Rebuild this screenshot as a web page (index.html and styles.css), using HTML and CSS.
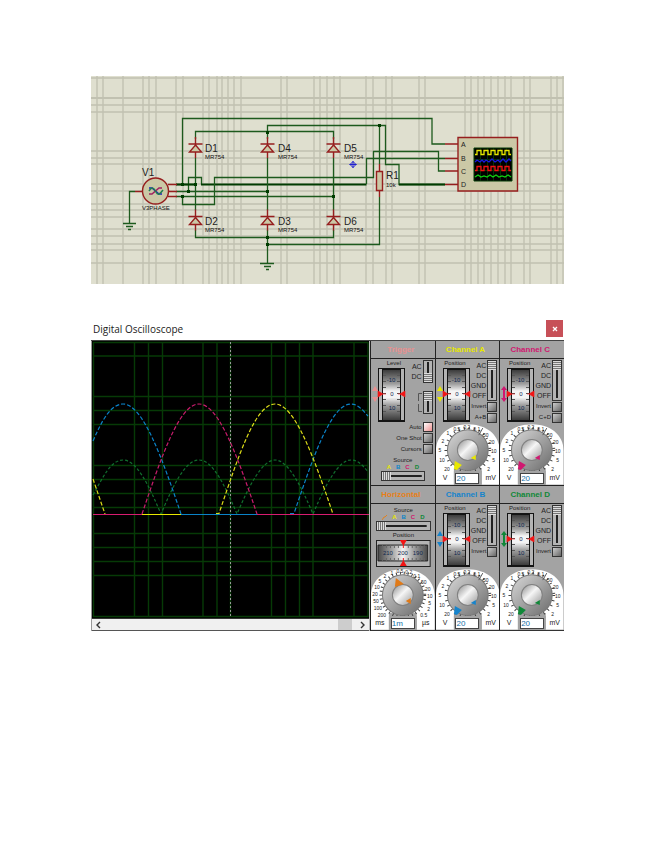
FILE: index.html
```html
<!DOCTYPE html>
<html lang="en">
<head>
<meta charset="utf-8">
<title>Three-phase rectifier</title>
<link rel="stylesheet" href="styles.css">
</head>
<body>
<svg class="defs" aria-hidden="true">
  <defs>
    <linearGradient id="drum" x1="0" y1="0" x2="0" y2="1">
      <stop offset="0" stop-color="#3c3c3c"/><stop offset=".28" stop-color="#a0a0a0"/><stop offset=".42" stop-color="#f4f4f4"/><stop offset=".55" stop-color="#f4f4f4"/><stop offset=".7" stop-color="#a0a0a0"/><stop offset="1" stop-color="#3c3c3c"/>
    </linearGradient>
    <linearGradient id="drum-h">
      <stop offset="0" stop-color="#4a4a4a"/><stop offset=".3" stop-color="#a8a8a8"/><stop offset=".5" stop-color="#f4f4f4"/><stop offset=".7" stop-color="#a8a8a8"/><stop offset="1" stop-color="#4a4a4a"/>
    </linearGradient>
    <linearGradient id="knob" x1="0" y1="0" x2="1" y2="1">
      <stop offset="0" stop-color="#d8d8d8"/><stop offset=".5" stop-color="#a2a2a2"/><stop offset="1" stop-color="#6c6c6c"/>
    </linearGradient>
    <linearGradient id="cap" x1="0" y1="0" x2="1" y2="1">
      <stop offset="0" stop-color="#8e8e8e"/><stop offset=".45" stop-color="#f6f6f6"/><stop offset="1" stop-color="#989898"/>
    </linearGradient>
    <symbol id="wheel" viewBox="0 0 34 54">
      <path d="M6 0h27v54H6z" fill="#141414"/>
      <path d="M7 1h3v51H7zM29 1h3v51h-3z" fill="#b4b4b4"/>
      <path d="M11 2h17v50H11z" fill="url(#drum)"/>
      <path d="M11 7.500h3m-3 6h3m-3 6h3m-3 6h3m-3 6h3m-3 6h3m-3 6h3M25 7.500h3m-3 6h3m-3 6h3m-3 6h3m-3 6h3m-3 6h3m-3 6h3" stroke="#555" stroke-width="1"/>
      <path d="M6 23l5 3-5 3zM33 23l-5 3 5 3zM11 26h3M26 26h3" fill="#f21414" stroke="#f21414" stroke-width=".6"/>
      <g class="drum-text"><text x="19" y="14">-10</text><text x="20" y="28">0</text><text x="20" y="42">10</text></g>
    </symbol>
    <symbol id="arrows" viewBox="0 0 34 54">
      <path d="M3 18l3 5H0zM3 34l3-5H0z" fill="currentColor"/>
    </symbol>
    <symbol id="arrows-joined" viewBox="0 0 34 54">
      <path d="M3 18l3 4H4v8h2l-3 4-3-4h2v-8H0z" fill="currentColor"/>
    </symbol>
    <symbol id="knob-body" viewBox="0 0 64 61">
      <circle cx="32" cy="26" r="21" fill="#777"/>
      <circle cx="32" cy="26" r="20" fill="url(#knob)"/>
      <circle cx="32" cy="26" r="11" fill="#808080"/>
      <circle cx="32" cy="26" r="10" fill="url(#cap)"/>
    </symbol>
    <symbol id="dial" viewBox="0 0 64 61">
      <path d="M0 61V27C0 10 14 0 32 0s32 10 32 27v34H46V44H18v17z" fill="#fff"/>
      <circle cx="32" cy="26" r="22" fill="none" stroke="#444" stroke-dasharray="1 4.200" stroke-width="3"/>
      <path d="M18 47h28v14H18z" fill="#a3a3a3"/>
      <use href="#knob-body" width="64" height="61"/>
      <g class="dial-text">
        <text x="11" y="47">20</text><text x="6" y="38">10</text><text x="4" y="28">5</text><text x="7" y="19">2</text><text x="12" y="11">1</text><text x="21" y="7">0.5</text><text x="31" y="5">0.2</text><text x="41" y="7">0.1</text><text x="50" y="13">50</text><text x="56" y="20">20</text><text x="58" y="29">10</text><text x="58" y="38">5</text><text x="53" y="47">2</text>
      </g>
      <path d="M43 11l4-7" stroke="#555"/>
      <g class="unit-text"><text x="9" y="56">V</text><text x="55" y="56">mV</text></g>
      <path d="M19 37l7 4-5 5-3-1zM35 34l5-3v5z" fill="currentColor"/>
    </symbol>
    <symbol id="diode" viewBox="-8 -8 16 24">
      <path d="M0-7V14" class="part"/><path d="M0 1l6 7H-6z" class="part body"/><path d="M-7 0H7" class="part"/>
    </symbol>
  </defs>
</svg>

<main class="page">
  <svg class="schematic" viewBox="91 76 473 208" role="img" aria-label="Rectifier schematic">
    <path class="sheet" d="M91 76h473v208H91z"/>
    <path class="grid" d="M97 76v208M103 76v208M123 76v208M143 76v208M149 76v208M156 76v208M176 76v208M183 76v208M203 76v208M209 76v208M217 76v208M222 76v208M228 76v208M234 76v208M241 76v208M281 76v208M287 76v208M314 76v208M320 76v208M327 76v208M334 76v208M340 76v208M366 76v208M373 76v208M386 76v208M392 76v208M419 76v208M425 76v208M465 76v208M471 76v208M478 76v208M484 76v208M491 76v208M498 76v208M505 76v208M511 76v208M524 76v208M530 76v208M551 76v208M557 76v208M563 76v208"/>
    <path class="grid" d="M91 78h473M91 105h473M91 112h473M91 151h473M91 158h473M91 164h473M91 184h473M91 191h473M91 204h473M91 210h473M91 217h473M91 229h473M91 236h473M91 244h473M91 250h473M91 263h473"/>
    <path class="grid heavy" d="M91 98h473"/>

    <path class="wire" d="M182.500 184V118.500H432V144h13M267.500 139V125.500H379.500h6V164.500H399V184.500h46M195.500 139V131.500H333.500V139"/>
    <path class="wire" d="M176 184.500h19.500M176 191.500h91.500M176 196.500h157.500M188.500 191V177.500H201.500V184.500"/>
    <path class="wire bold" d="M176 184.500h19M201 184.500H366.500M399 184.500h46"/>
    <path class="wire" d="M366.500 184V158.500H445M182.500 197V204.500H214.500V177.500H373.500V151.500H438.500V171H445"/>
    <path class="wire" d="M195.500 158v52M267.500 158v52M333.500 158v52M195.500 230v7.500h138V230M267.500 230v33M379.500 125v39M379.500 197v47.500H267.500M135 191.500h-5.500V223"/>
    <path class="ground" d="M260 263.500h14M264 266.500h7M266 269.500h3M123 223.500h13M126 226.500h7M128 229.500h3"/>
    <path class="node" d="M181 183h3v3h-3zM194 183h3v3h-3zM187 190h3v3h-3zM181 195h3v3h-3zM266 131h3v3h-3zM266 190h3v3h-3zM332 195h3v3h-3zM266 236h3v3h-3zM266 243h3v3h-3zM378 124h3v3h-3z"/>

    <use href="#diode" x="187.500" y="136" width="16" height="24"/>
    <use href="#diode" x="259.500" y="136" width="16" height="24"/>
    <use href="#diode" x="325.500" y="136" width="16" height="24"/>
    <use href="#diode" x="187.500" y="208.500" width="16" height="24"/>
    <use href="#diode" x="259.500" y="208.500" width="16" height="24"/>
    <use href="#diode" x="325.500" y="208.500" width="16" height="24"/>

    <path class="part" d="M135 191.500h8M168 184.500h9M168 191.500h9M168 196.500h9M379.500 164v33M445 144h13M445 158.500h13M445 171h13M445 184.500h13"/>
    <circle class="part body" cx="155.500" cy="191" r="13"/>
    <g class="phases"><path class="phase-a" d="M149 188h3l7 6h3"/><path class="phase-b" d="M149 194h3l7-6h3"/><path class="phase-c" d="M149 191c3-5 5-3 7 1s4 2 7-2"/></g>
    <path class="part body" d="M376.500 171.500h6v19h-6z"/>
    <path class="part body" d="M458 137.500h59.500v53.500H458z"/>
    <path d="M474 148h38v33h-38z"/>
    <path d="M474 148h38v33h-38z" fill="none" stroke="#073c07"/>
    <path d="M480.500 148v33M487.500 148v33M493.500 148v33M500.500 148v33M506.500 148v33M474 159.500h38M474 170.500h38" stroke="#063306"/>
    <g class="traces">
      <path class="yellow" d="M475 154.500h2v-4h4v4h3v-4h4v4h3v-4h4v4h3v-4h4v4h3v-4h4v4h2"/>
      <path class="blue" d="M475 162l2-2 3 2 2-2 2 2 2-2 3 2 3-3 3 3 3-2 2 2 3-3 3 3 3-3 2 2"/>
      <path class="red" d="M475 170.500h2v-4h4v4h3v-4h4v4h3v-4h4v4h3v-4h4v4h3v-4h4v4h2"/>
      <path class="green" d="M475 177l3-2 3 2 3-1 3 1 3-2 3 2 3-2 3 2 3-1 3 1 3-2 3 2"/>
    </g>
    <path d="M350 164.500l3-3 3 3-3 3zM349.500 164.500h7M353 161v7" fill="none" stroke="#2020d0"/>
    <g class="name">
      <text x="142" y="176">V1</text><text x="205" y="152">D1</text><text x="278" y="152">D4</text><text x="344" y="152">D5</text>
      <text x="205" y="225">D2</text><text x="278" y="225">D3</text><text x="344" y="225">D6</text><text x="386" y="179">R1</text>
    </g>
    <g class="value">
      <text x="142" y="210">V3PHASE</text><text x="205" y="159">MR754</text><text x="278" y="159">MR754</text><text x="344" y="159">MR754</text>
      <text x="205" y="232">MR754</text><text x="278" y="232">MR754</text><text x="344" y="232">MR754</text><text x="386" y="187">10k</text>
    </g>
    <g class="pin"><text x="461" y="147">A</text><text x="461" y="161">B</text><text x="461" y="174">C</text><text x="461" y="187">D</text></g>
  </svg>

  <section class="scope">
    <header class="titlebar">
      <h1>Digital Oscilloscope</h1>
      <button class="close" type="button" aria-label="Close"><svg viewBox="0 0 6 6" width="6" height="6"><path d="M1 1l4 4M5 1L1 5" stroke="#fff" stroke-width="1.300"/></svg></button>
    </header>
    <div class="instrument">
      <div class="display">
        <svg class="plot" viewBox="92 341 277 277" preserveAspectRatio="none" role="img" aria-label="Waveforms">
          <path d="M92 341h277v277H92z"/>
          <path class="graticule" d="M93.500 342v275M134.500 342v275M148.500 342v275M162.500 342v275M203 342v275M217 342v275M230.500 342v275M271.500 342v275M285.500 342v275M299.500 342v275M313 342v275M354 342v275M368 342v275M93 342.500h275M93 356h275M93 396.500h275M93 410.500h275M93 424.500h275M93 465.500h275M93 479.500h275M93 493.500h275M93 507.500h275M93 533.500h275M93 547.500h275M93 561.500h275M93 575.500h275M93 616.500h275"/>
          <path class="cursor" d="M230.500 342v275"/>
          <g class="wave-d"><path d="M93 495c10-18 18-35 30-35 14 0 26 26 38 54 12-28 24-54 38-54s26 26 38 54c12-28 25-54 38-54s26 26 38 54c12-28 25-54 38-54 6 0 11 4 17 12"/></g>
          <g class="wave-b"><path d="M93 441c9-21 18-37 30-37 20 0 39 54 58 110"/><path d="M290 513.500h4c19-56 37-109.500 57-109.500 6 0 11 5 17 12"/></g>
          <g class="wave-c"><path d="M142 514c19-56 37-110 57-110s39 54 58 110"/></g>
          <g class="wave-a"><path d="M93 479l12 35M216 513.500h3c19-56 36-109.500 56-109.500s39 54 58 110"/></g>
          <path class="base-c" d="M93 514.500h276"/><path class="base-a" d="M142 514.500h39"/><path class="base-b" d="M181 514.500h76"/>
        </svg>
        <div class="scrollbar">
          <button type="button" aria-label="Scroll left"><svg viewBox="0 0 6 8" width="6" height="8"><path d="M5 1L2 4l3 3"/></svg></button>
          <input type="range" aria-label="Scroll" min="0" max="100" value="98">
          <button type="button" aria-label="Scroll right"><svg viewBox="0 0 6 8" width="6" height="8"><path d="M1 1l3 3-3 3"/></svg></button>
        </div>
      </div>

      <div class="controls">
        <section class="panel trigger">
          <h2>Trigger</h2>
          <div class="trigger-body">
            <div class="knob-column"><span>Level</span><svg class="wheel" viewBox="0 0 34 54"><use href="#wheel"/><use href="#arrows"/></svg></div>
            <div class="trigger-side">
              <div class="switch"><label for="t-couple">AC<br>DC</label><input id="t-couple" class="vertical" type="range" min="0" max="1" value="1"></div>
              <div class="switch"><label for="t-edge"><svg width="6" height="22" viewBox="0 0 6 22" role="img" aria-label="Edge"><path d="M6 1.500H2.500V9M2.500 12v7.500H6" fill="none" stroke="#555"/></svg></label><input id="t-edge" class="vertical" type="range" min="0" max="1" value="0"></div>
            </div>
          </div>
          <div class="modes">
            <label for="auto">Auto</label><button id="auto" class="lit" type="button"></button>
            <label for="oneshot">One Shot</label><button id="oneshot" type="button"></button>
            <label for="cursors">Cursors</label><button id="cursors" type="button"></button>
          </div>
          <div class="source">
            <label for="t-source">Source</label>
            <div class="letters"><b class="a">A</b><b class="b">B</b><b class="c">C</b><b class="d">D</b></div>
            <input id="t-source" class="horizontal" type="range" min="0" max="3" value="0">
          </div>
        </section>

        <section class="panel channel-a">
          <h2>Channel A</h2>
          <div class="channel-body">
            <div class="knob-column"><span>Position</span><svg class="wheel" viewBox="0 0 34 54"><use href="#wheel"/><use href="#arrows"/></svg></div>
            <div class="channel-side">
              <div class="switch"><label for="a-couple">AC<br>DC<br>GND<br>OFF</label><input id="a-couple" class="vertical" type="range" min="0" max="3" value="0"></div>
              <div class="push"><label for="a-inv">Invert</label><button id="a-inv" type="button"></button></div>
              <div class="push"><label for="a-sum">A+B</label><button id="a-sum" type="button"></button></div>
            </div>
          </div>
          <div class="dial"><svg viewBox="0 0 64 61"><use href="#dial"/></svg><input type="text" aria-label="Channel A scale" value="20"></div>
        </section>

        <section class="panel channel-c">
          <h2>Channel C</h2>
          <div class="channel-body">
            <div class="knob-column"><span>Position</span><svg class="wheel" viewBox="0 0 34 54"><use href="#wheel"/><use href="#arrows-joined"/></svg></div>
            <div class="channel-side">
              <div class="switch"><label for="c-couple">AC<br>DC<br>GND<br>OFF</label><input id="c-couple" class="vertical" type="range" min="0" max="3" value="0"></div>
              <div class="push"><label for="c-inv">Invert</label><button id="c-inv" type="button"></button></div>
              <div class="push"><label for="c-sum">C+D</label><button id="c-sum" type="button"></button></div>
            </div>
          </div>
          <div class="dial"><svg viewBox="0 0 64 61"><use href="#dial"/></svg><input type="text" aria-label="Channel C scale" value="20"></div>
        </section>

        <section class="panel horizontal-panel">
          <h2>Horizontal</h2>
          <div class="timebase">
            <label for="h-source">Source</label>
            <div class="letters"><svg width="5" height="5" viewBox="0 0 5 5"><path d="M0 5l2-3h1l2-2" fill="none" stroke="#e08020"/></svg><b class="a">A</b><b class="b">B</b><b class="c">C</b><b class="d">D</b></div>
            <input id="h-source" class="horizontal" type="range" min="0" max="4" value="0">
            <span>Position</span>
            <svg class="drum" viewBox="0 0 55 27">
              <path d="M0 0h55v27H0z" fill="#222"/><path d="M1 1h53v25H1z" fill="#b4b4b4"/><path d="M2 5h50v16H2z" fill="url(#drum-h)" stroke="#222"/>
              <path d="M6.500 5v3m4-3v3m4-3v3m4-3v3m4-3v3m10-3v3m4-3v3m4-3v3m4-3v3m4-3v3M6.500 18v3m4-3v3m4-3v3m4-3v3m4-3v3m10-3v3m4-3v3m4-3v3m4-3v3m4-3v3" stroke="#666"/>
              <path d="M24 0h7l-3 5v3h-1V5zM24 26h7l-3-5v-3h-1v3z" fill="#f21414"/>
              <g class="drum-text"><text x="12" y="15">210</text><text x="27" y="15">200</text><text x="42" y="15">190</text></g>
            </svg>
          </div>
          <div class="dial">
            <svg viewBox="0 0 64 61">
              <path d="M0 61V27C0 10 14 0 32 0s32 10 32 27v34H46V44H18v17z" fill="#fff"/>
              <circle cx="32" cy="26" r="22" fill="none" stroke="#444" stroke-dasharray="1 3" stroke-width="3"/>
              <path d="M18 47h28v14H18z" fill="#a3a3a3"/>
              <use href="#knob-body"/>
              <g class="dial-text"><text x="11" y="48">200</text><text x="7" y="41">100</text><text x="5" y="34">50</text><text x="4" y="27">20</text><text x="6" y="20">10</text><text x="9" y="14">5</text><text x="14" y="9">2</text><text x="21" y="6">1</text><text x="29" y="4">0.5</text><text x="38" y="5">0.2</text><text x="46" y="9">0.1</text><text x="53" y="15">50</text><text x="57" y="22">20</text><text x="59" y="29">10</text><text x="59" y="36">5</text><text x="58" y="42">2</text><text x="53" y="48">0.5</text></g>
              <g class="unit-text"><text x="9" y="56">ms</text><text x="55" y="56">µs</text></g>
              <path d="M25 9l8 6-9 3zM35 32l5-3v6z" fill="#e07a18"/>
            </svg>
            <input type="text" aria-label="Timebase" value="1m">
          </div>
        </section>

        <section class="panel channel-b">
          <h2>Channel B</h2>
          <div class="channel-body">
            <div class="knob-column"><span>Position</span><svg class="wheel" viewBox="0 0 34 54"><use href="#wheel"/><use href="#arrows"/></svg></div>
            <div class="channel-side">
              <div class="switch"><label for="b-couple">AC<br>DC<br>GND<br>OFF</label><input id="b-couple" class="vertical" type="range" min="0" max="3" value="0"></div>
              <div class="push"><label for="b-inv">Invert</label><button id="b-inv" type="button"></button></div>
            </div>
          </div>
          <div class="dial"><svg viewBox="0 0 64 61"><use href="#dial"/></svg><input type="text" aria-label="Channel B scale" value="20"></div>
        </section>

        <section class="panel channel-d">
          <h2>Channel D</h2>
          <div class="channel-body">
            <div class="knob-column"><span>Position</span><svg class="wheel" viewBox="0 0 34 54"><use href="#wheel"/><use href="#arrows-joined"/></svg></div>
            <div class="channel-side">
              <div class="switch"><label for="d-couple">AC<br>DC<br>GND<br>OFF</label><input id="d-couple" class="vertical" type="range" min="0" max="3" value="0"></div>
              <div class="push"><label for="d-inv">Invert</label><button id="d-inv" type="button"></button></div>
            </div>
          </div>
          <div class="dial"><svg viewBox="0 0 64 61"><use href="#dial"/></svg><input type="text" aria-label="Channel D scale" value="20"></div>
        </section>
      </div>
    </div>
  </section>
</main>
</body>
</html>
```
FILE: styles.css
```css
* { box-sizing: border-box; }
body { margin: 0; background: #fff; font-family: "Liberation Sans", Arial, sans-serif; color: #222; }
svg { display: block; }
button { padding: 0; border: 0; border-radius: 0; }
input { margin: 0; padding: 0; border-radius: 0; }
.defs { position: absolute; width: 0; height: 0; }

.page { padding: 76px 91px; display: flex; flex-direction: column; gap: 35px; }

/* Schematic */
.schematic { width: 100%; height: auto; }
.sheet { fill: #dfdfcf; }
.grid { stroke: #c1c1b1; stroke-width: 1.4px; fill: none; }
.heavy { stroke-width: 2px; }
.wire, .ground { fill: none; stroke: #1d5a1d; stroke-width: 1.3px; }
.bold { stroke: #003c00; stroke-width: 2px; }
.node { fill: #003c00; }
.part { fill: none; stroke: #961e1e; stroke-width: 1.4px; }
.body { fill: #cbc8a6; }
.phases path { fill: none; stroke-width: 1.5px; }
.phase-a { stroke: #2020c0; }
.phase-b { stroke: #a02060; }
.phase-c { stroke: #208050; }
.traces path { fill: none; stroke-width: 1.3px; }
.yellow { stroke: #e8e800; }
.blue { stroke: #1818e0; }
.red { stroke: #f01010; }
.green { stroke: #10d010; }
.name { font-size: 10px; fill: #222; }
.value { font-size: 6px; fill: #111; }
.pin { font-size: 7px; fill: #222; }

/* Oscilloscope window */
.titlebar { display: flex; justify-content: space-between; align-items: center; height: 21px; padding: 0 1px 2px 2px; }
.titlebar h1 { margin: 0; font: 10px "Open Sans", sans-serif; color: #222; }
.close { width: 17px; height: 17px; background: #c75058; display: grid; place-items: center; }
.instrument { display: grid; grid-template-columns: 1fr 194px; border-top: 1px solid #444; }
.display { display: flex; flex-direction: column; border-left: 1px solid #999; border-right: 1px solid #bbb; min-width: 0; }
.plot { width: 100%; flex: 1; min-height: 277px; }
.graticule { fill: none; stroke: #063a06; stroke-width: 1.4px; }
.cursor { stroke: #999; stroke-dasharray: 2 2; }
.plot g { fill: none; stroke-width: 1.2px; stroke-dasharray: 4 2; }
.plot .wave-d { stroke: #10702e; stroke-dasharray: 3 2; }
.wave-b { stroke: #0a83c8; }
.wave-c { stroke: #c81c6c; }
.wave-a { stroke: #dcdc18; }
.base-c { stroke: #d81c70; }
.base-a { stroke: #e8e800; }
.base-b { stroke: #0a83c8; }

.scrollbar { display: grid; grid-template-columns: 12px 1fr 12px; height: 13px; background: #f0f0f0; border-top: 1px solid #333; border-bottom: 1px solid #555; }
.scrollbar button { background: none; display: grid; place-items: center; }
.scrollbar path { fill: none; stroke: #333; stroke-width: 1.4px; }
.scrollbar input { appearance: none; width: 100%; height: 11px; background: none; }
.scrollbar input::-webkit-slider-thumb { appearance: none; width: 14px; height: 11px; background: #cdcdcd; }

/* Control panels */
.controls { display: grid; grid-template-columns: repeat(3, 1fr); grid-template-rows: repeat(2, 144px); gap: 1px; background: #222; border-left: 1px solid #222; border-bottom: 1px solid #333; }
.panel { display: flex; flex-direction: column; background: #a3a3a3; min-width: 0; font-size: 6px; line-height: 7px; overflow: hidden; }
.panel h2 { margin: 0; padding-right: 4px; height: 18px; font-size: 8px; line-height: 17px; text-align: center; border-bottom: 1px solid #222; color: inherit; }
.panel label, .panel span { color: #222; }
.trigger { color: #e89090; }
.horizontal-panel { color: #e88018; }
.channel-a { color: #e8e800; }
.channel-b { color: #1684cc; }
.channel-c { color: #d01870; }
.channel-d { color: #108838; }

.channel-body, .trigger-body { display: flex; justify-content: space-between; padding: 1px 2px 0 1px; }
.channel-body { height: 64px; }
.knob-column { display: flex; flex-direction: column; gap: 1px; text-align: right; }
.knob-column span { padding-right: 5px; }
.wheel { width: 34px; height: 54px; }
.drum-text { font-size: 6px; fill: #102850; text-anchor: middle; }

.channel-side, .trigger-side { display: flex; flex-direction: column; }
.switch { display: flex; justify-content: flex-end; align-items: center; gap: 1px; }
.switch label { text-align: right; font-size: 7px; line-height: 10px; }
.trigger-side { gap: 8px; }
.push { display: flex; justify-content: flex-end; align-items: center; gap: 1px; height: 11px; }
.push button, .modes button { width: 10px; height: 10px; border: 1px solid #333; background: linear-gradient(135deg, #ccc, #666); }
.modes .lit { background: linear-gradient(135deg, #fff, #f09090); }

.vertical, .horizontal { appearance: none; background: linear-gradient(#222, #222) center no-repeat, #b4b4b4; border: 1px solid #333; }
.vertical { writing-mode: vertical-lr; width: 10px; height: 41px; background-size: 2px 90%; }
.trigger .vertical { height: 23px; }
.horizontal { width: 100%; height: 10px; background-size: 90% 2px; }
.vertical::-webkit-slider-thumb { appearance: none; width: 8px; height: 9px; background: repeating-linear-gradient(#ddd 0 1px, #777 1px 2px); }
.horizontal::-webkit-slider-thumb { appearance: none; width: 9px; height: 8px; background: repeating-linear-gradient(90deg, #ddd 0 1px, #777 1px 2px); }

.modes { display: grid; grid-template-columns: 1fr 10px; gap: 1px; padding: 0 2px 0 0; align-items: center; text-align: right; }
.source, .timebase { display: flex; flex-direction: column; text-align: center; }
.source { padding: 3px 10px 0; }
.letters { display: flex; justify-content: center; gap: 5px; align-items: center; height: 7px; }
.letters .a { color: #e8e800; }
.letters .b { color: #0a83c8; }
.letters .c { color: #d01870; }
.letters .d { color: #108838; }
.timebase { height: 64px; padding: 3px 4px 0 5px; }
.timebase span { padding: 1px 0; }
.drum { width: 100%; height: 27px; }

.dial { display: grid; flex: 1; align-items: end; justify-items: center; }
.dial svg, .dial input { grid-area: 1 / 1; }
.dial svg { width: 100%; height: 61px; }
.dial input { width: 24px; height: 11px; margin-bottom: 1px; border: 1px solid #444; background: #fff; color: #1670a8; font: 8px/9px "Liberation Sans", Arial, sans-serif; }
.dial-text { font-size: 5px; fill: #222; text-anchor: middle; }
.unit-text { font-size: 7px; fill: #222; text-anchor: middle; }
```
